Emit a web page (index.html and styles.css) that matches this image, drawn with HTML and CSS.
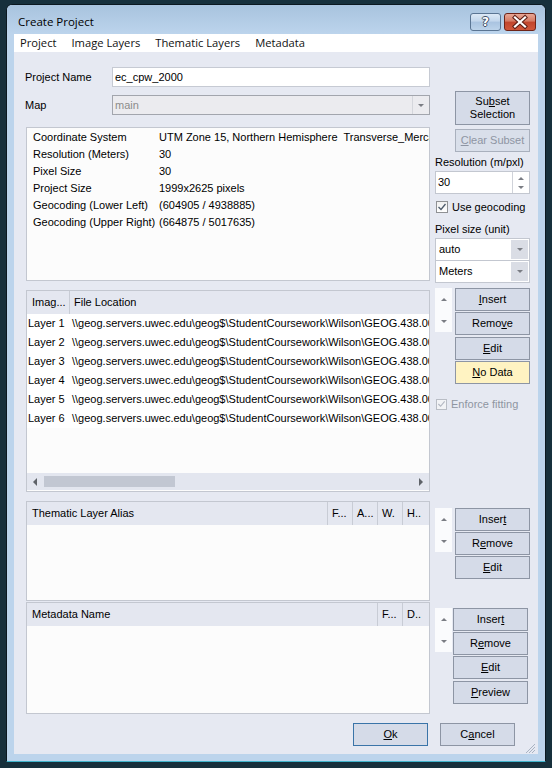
FILE: index.html
```
<!DOCTYPE html>
<html>
<head>
<meta charset="utf-8">
<link rel="stylesheet" href="styles.css">
</head>
<body>
<div class="win">
  <div class="titlebar">
    <span class="title">Create Project</span>
    <div class="tbtns">
      <span class="tb help">?</span>
      <span class="tb close"><svg width="30" height="16" viewBox="0 0 30 16"><path d="M10 3.5 L20 12.5 M20 3.5 L10 12.5" stroke="#5b1d14" stroke-width="4.2" stroke-linecap="square"/><path d="M10 3.5 L20 12.5 M20 3.5 L10 12.5" stroke="#ffffff" stroke-width="2.2" stroke-linecap="square"/></svg></span>
    </div>
  </div>
  <div class="client">
    <div class="menubar">
      <span>Project</span><span>Image Layers</span><span>Thematic Layers</span><span>Metadata</span>
    </div>
    <div class="content">
      <div class="sec sec-top">
        <div class="left">
          <div class="field"><span class="flabel">Project Name</span><div class="input">ec_cpw_2000</div></div>
          <div class="field"><span class="flabel">Map</span><div class="combo-dis"><span class="cval">main</span><span class="cdrop"><span class="tri-down"></span></span></div></div>
          <div class="info">
            <div class="irow"><span class="k">Coordinate System</span><span>UTM Zone 15, Northern Hemisphere  Transverse_Mercator</span></div>
            <div class="irow"><span class="k">Resolution (Meters)</span><span>30</span></div>
            <div class="irow"><span class="k">Pixel Size</span><span>30</span></div>
            <div class="irow"><span class="k">Project Size</span><span>1999x2625 pixels</span></div>
            <div class="irow"><span class="k">Geocoding (Lower Left)</span><span>(604905 / 4938885)</span></div>
            <div class="irow"><span class="k">Geocoding (Upper Right)</span><span>(664875 / 5017635)</span></div>
          </div>
        </div>
        <div class="right right-top">
          <div class="btn tall">Su<u>b</u>set<br>Selection</div>
          <div class="btn dis"><u>C</u>lear Subset</div>
          <div class="lbl first">Resolution (m/pxl)</div>
          <div class="spin"><span class="sval">30</span><span class="sarrows"><span class="tri-up"></span><span class="tri-down"></span></span></div>
          <div class="chk-row"><span class="chk"><svg width="10" height="10" viewBox="0 0 10 10"><path d="M1.5 5 L4 7.5 L8.5 2" fill="none" stroke="#4d5a6b" stroke-width="1.3"/></svg></span><span>Use geocoding</span></div>
          <div class="lbl">Pixel size (unit)</div>
          <div class="dd"><span class="dval">auto</span><span class="ddrop"><span class="tri-down"></span></span></div>
          <div class="dd second"><span class="dval">Meters</span><span class="ddrop"><span class="tri-down"></span></span></div>
        </div>
      </div>

      <div class="sec sec-img">
        <div class="left list img-list">
          <div class="lhead">
            <span class="hc c-img">Imag...</span><span class="hc c-file">File Location</span>
          </div>
          <div class="lrows">
            <div class="lrow"><span class="c1">Layer 1</span><span class="c2">\\geog.servers.uwec.edu\geog$\StudentCoursework\Wilson\GEOG.438.001\ec_cpw_2000\layer1.tif</span></div>
            <div class="lrow"><span class="c1">Layer 2</span><span class="c2">\\geog.servers.uwec.edu\geog$\StudentCoursework\Wilson\GEOG.438.001\ec_cpw_2000\layer2.tif</span></div>
            <div class="lrow"><span class="c1">Layer 3</span><span class="c2">\\geog.servers.uwec.edu\geog$\StudentCoursework\Wilson\GEOG.438.001\ec_cpw_2000\layer3.tif</span></div>
            <div class="lrow"><span class="c1">Layer 4</span><span class="c2">\\geog.servers.uwec.edu\geog$\StudentCoursework\Wilson\GEOG.438.001\ec_cpw_2000\layer4.tif</span></div>
            <div class="lrow"><span class="c1">Layer 5</span><span class="c2">\\geog.servers.uwec.edu\geog$\StudentCoursework\Wilson\GEOG.438.001\ec_cpw_2000\layer5.tif</span></div>
            <div class="lrow"><span class="c1">Layer 6</span><span class="c2">\\geog.servers.uwec.edu\geog$\StudentCoursework\Wilson\GEOG.438.001\ec_cpw_2000\layer6.tif</span></div>
          </div>
          <div class="hscroll">
            <span class="tri-left"></span>
            <span class="thumb"></span>
            <span class="tri-right"></span>
          </div>
        </div>
        <div class="right right-img">
          <div class="btnrow">
            <div class="arrows"><span class="tri-up"></span><span class="tri-down"></span></div>
            <div class="btncol">
              <div class="btn"><u>I</u>nsert</div>
              <div class="btn g1">Remo<u>v</u>e</div>
              <div class="btn g2"><u>E</u>dit</div>
              <div class="btn g1 nodata"><u>N</u>o Data</div>
            </div>
          </div>
          <div class="chk-row enforce"><span class="chk dis"><svg width="10" height="10" viewBox="0 0 10 10"><path d="M1.5 5 L4 7.5 L8.5 2" fill="none" stroke="#b3b8c2" stroke-width="1.3"/></svg></span><span>Enforce fitting</span></div>
        </div>
      </div>

      <div class="sec sec-them">
        <div class="left list them-list">
          <div class="lhead">
            <span class="hc c-alias">Thematic Layer Alias</span><span class="hc c-s">F...</span><span class="hc c-s">A...</span><span class="hc c-s">W.</span><span class="hc c-s last">H..</span>
          </div>
        </div>
        <div class="right right-them">
          <div class="btnrow">
            <div class="arrows"><span class="tri-up"></span><span class="tri-down"></span></div>
            <div class="btncol">
              <div class="btn">Inser<u>t</u></div>
              <div class="btn g1">R<u>e</u>move</div>
              <div class="btn g1"><u>E</u>dit</div>
            </div>
          </div>
        </div>
      </div>

      <div class="sec sec-meta">
        <div class="left list meta-list">
          <div class="lhead">
            <span class="hc c-meta">Metadata Name</span><span class="hc c-s">F...</span><span class="hc c-s last">D..</span>
          </div>
        </div>
        <div class="right right-meta">
          <div class="btnrow">
            <div class="arrows"><span class="tri-up"></span><span class="tri-down"></span></div>
            <div class="btncol">
              <div class="btn">Inser<u>t</u></div>
              <div class="btn g1">R<u>e</u>move</div>
              <div class="btn g1"><u>E</u>dit</div>
              <div class="btn g2"><u>P</u>review</div>
            </div>
          </div>
        </div>
      </div>

      <div class="footer">
        <div class="btn ok"><u>O</u>k</div>
        <div class="btn cancel">C<u>a</u>ncel</div>
      </div>
    </div>
    <svg class="grip" width="11" height="10" viewBox="0 0 11 10">
      <path d="M10 1 L1 10 M10 4 L4 10 M10 7 L7 10" stroke="#a9b3c2" stroke-width="1"/>
    </svg>
  </div>
</div>
</body>
</html>
```

FILE: styles.css
```
* { box-sizing: border-box; }
html, body { margin: 0; }
body {
  background: #17303c;
  width: 552px;
  height: 768px;
  overflow: hidden;
  padding-top: 4px;
  font-family: "Liberation Sans", Arial, sans-serif;
  font-size: 11px;
  color: #000;
}
.win {
  margin-left: 6px;
  width: 540px;
  height: 758px;
  border: 1px solid #0b1820;
  border-bottom-color: #3fb3cb;
  border-radius: 6px 6px 0 0;
  background: #bcd4ec;
  display: flex;
  flex-direction: column;
}
.titlebar {
  height: 29px;
  flex: none;
  display: flex;
  justify-content: space-between;
  padding: 0 9px 0 11px;
  background: linear-gradient(#a8c3de, #bcd4ec);
  border-radius: 5px 5px 0 0;
}
.title {
  font-family: "Open Sans", "Noto Sans", sans-serif;
  font-size: 11.5px;
  line-height: 16px;
  margin-top: 9px;
  color: #000;
}
.tbtns { display: flex; gap: 3px; margin-top: 8px; height: 18px; }
.tb {
  height: 18px;
  border-radius: 3px;
  display: flex;
  align-items: center;
  justify-content: center;
}
.help {
  width: 31px;
  border: 1px solid #5a7593;
  background: linear-gradient(#dce9f6 0%, #c2d6ec 45%, #a9c3e0 50%, #bcd3ea 100%);
  color: #fff;
  font-family: "DejaVu Sans", sans-serif;
  font-weight: bold;
  font-size: 12px;
  line-height: 16px;
  text-shadow: 1px 0 0 #3d4f66, -1px 0 0 #3d4f66, 0 1px 0 #3d4f66, 0 -1px 0 #3d4f66;
}
.close {
  width: 32px;
  border: 1px solid #6e2418;
  background: linear-gradient(#e8a796 0%, #d57a63 45%, #c1452c 50%, #d0573b 100%);
}
.client {
  flex: 1;
  margin: 0 7px 7px;
  background: #e6e9f2;
  display: flex;
  flex-direction: column;
  position: relative;
}
.menubar {
  height: 18px;
  flex: none;
  background: #fff;
  display: flex;
  padding-left: 6px;
  font-family: "Open Sans", "Noto Sans", sans-serif;
  font-size: 11.2px;
  line-height: 18px;
  color: #111;
}
.menubar span { margin-right: 15px; }
.content {
  flex: 1;
  padding-left: 12px;
  display: flex;
  flex-direction: column;
}
.sec { display: flex; align-items: flex-start; flex: none; }
.left { width: 404px; flex: none; }
.right { width: 95px; margin-left: 5px; flex: none; }

/* top */
.sec-top .left { margin-top: 15px; }
.field { display: flex; align-items: center; height: 20px; }
.field + .field { margin-top: 8px; }
.flabel { width: 87px; margin-left: -1px; flex: none; }
.input {
  flex: 1;
  height: 20px;
  border: 1px solid #c6cad3;
  background: #fff;
  padding-left: 2px;
  line-height: 18px;
}
.combo-dis {
  flex: 1;
  height: 20px;
  border: 1px solid #a2a5ad;
  background: #ebebef;
  color: #8b8b8b;
  display: flex;
  line-height: 18px;
}
.cval { flex: 1; padding-left: 2px; }
.cdrop {
  width: 17px;
  border-left: 1px solid #d4d6dc;
  display: flex;
  align-items: center;
  justify-content: center;
}
.info {
  margin-top: 12px;
  height: 154px;
  border: 1px solid #c3c7d0;
  background: #fcfcfc;
  padding: 1px 0 0 6px;
  overflow: hidden;
}
.irow { display: flex; height: 17px; line-height: 17px; white-space: pre; }
.irow .k { width: 126px; flex: none; }

.right-top { margin-top: 39px; }
.btn {
  height: 23px;
  width: 75px;
  margin-left: 20px;
  border: 1px solid #8d95a4;
  background: #d5dbe8;
  text-align: center;
  line-height: 21px;
  color: #000;
  white-space: nowrap;
}
.btn.tall { height: 34px; line-height: 13px; padding-top: 3px; }
.btn.dis {
  margin-top: 4px;
  border-color: #a9b0bd;
  color: #8e95a3;
  background: #d9dfea;
}
.lbl { height: 18px; line-height: 18px; }
.lbl.first { margin-top: 1px; }
.spin {
  height: 23px;
  border: 1px solid #c3c7d0;
  background: #fff;
  display: flex;
  line-height: 21px;
}
.sval { flex: 1; padding-left: 2px; }
.sarrows {
  width: 17px;
  border-left: 1px solid #cfd2d9;
  display: flex;
  flex-direction: column;
  align-items: center;
  justify-content: center;
  gap: 6px;
}
.chk-row { height: 26px; display: flex; align-items: center; }
.chk {
  width: 12px;
  height: 12px;
  margin-left: 1px;
  margin-right: 4px;
  border: 1px solid #8f9194;
  background: linear-gradient(#f0f0f0, #ffffff);
  display: flex;
  align-items: center;
  justify-content: center;
}
.chk.dis { border-color: #b9bdc5; background: #f2f3f6; }
.dd {
  height: 23px;
  border: 1px solid #c3c7d0;
  background: #fff;
  display: flex;
  line-height: 21px;
}
.dd.second { margin-top: -1px; }
.dval { flex: 1; padding-left: 3px; }
.ddrop {
  width: 17px;
  margin: 1px 1px 1px 0;
  background: #dadde5;
  display: flex;
  align-items: center;
  justify-content: center;
}

/* triangles */
.tri-up, .tri-down { width: 0; height: 0; border-left: 3px solid transparent; border-right: 3px solid transparent; }
.tri-up { border-bottom: 3px solid #7a7d84; }
.tri-down { border-top: 3px solid #7a7d84; }
.tri-left, .tri-right { width: 0; height: 0; border-top: 4px solid transparent; border-bottom: 4px solid transparent; }
.tri-left { border-right: 4px solid #5f6369; }
.tri-right { border-left: 4px solid #5f6369; }

/* lists */
.list {
  border: 1px solid #c3c7d0;
  background: #fcfcfc;
  display: flex;
  flex-direction: column;
  overflow: hidden;
}
.lhead {
  height: 23px;
  flex: none;
  display: flex;
  background: #e4e7f0;
  line-height: 23px;
}
.hc { padding-left: 4px; border-right: 1px solid #c8ccd5; white-space: nowrap; overflow: hidden; }
.c-img { width: 43px; padding-left: 5px; }
.c-file { flex: 1; border-right: none; }
.c-alias, .c-meta { flex: 1; padding-left: 5px; }
.c-s { width: 25px; }
.c-s.last { width: 26px; border-right: none; }
.lrows { flex: 1; }
.lrow { display: flex; height: 19px; line-height: 19px; white-space: nowrap; background: #fff; }
.c1 { width: 45px; flex: none; padding-left: 1px; }
.c2 { white-space: nowrap; }
.hscroll {
  height: 17px;
  margin-bottom: 1px;
  flex: none;
  background: #e3e6ef;
  display: flex;
  align-items: center;
  padding: 0 6px 0 6px;
}
.thumb {
  width: 131px;
  height: 11px;
  margin-left: 7px;
  background: #c2c7d2;
}
.hscroll .tri-right { margin-left: auto; }

.sec-img { margin-top: 5px; }
.img-list { margin-top: 2px; height: 202px; }
.btnrow { display: flex; align-items: flex-start; }
.arrows {
  width: 17px;
  height: 44px;
  background: #fafbfd;
  display: flex;
  flex-direction: column;
  align-items: center;
  padding-top: 10px;
  gap: 19px;
}
.btncol { margin-left: 3px; }
.btncol .btn { margin-left: 0; }
.btn.g1 { margin-top: 1px; }
.btn.g2 { margin-top: 2px; }
.btn.nodata { background: #fff3c2; }
.enforce { height: 16px; margin-top: 12px; color: #8e95a1; }
.enforce .chk { width: 11px; height: 11px; }

.sec-them { margin-top: 9px; }
.them-list { height: 100px; }
.right-them { margin-top: 7px; }

.sec-meta { margin-top: 1px; }
.meta-list { height: 112px; }
.right-meta { margin-top: 6px; }
.right-meta .btncol { margin-left: 1px; }

.footer { display: flex; margin-top: 9px; }
.footer .btn { margin-left: 0; }
.btn.ok { margin-left: 327px; border-color: #3a74a8; }
.btn.cancel { margin-left: 12px; }

.grip { position: absolute; right: 2px; bottom: 1px; }
```
